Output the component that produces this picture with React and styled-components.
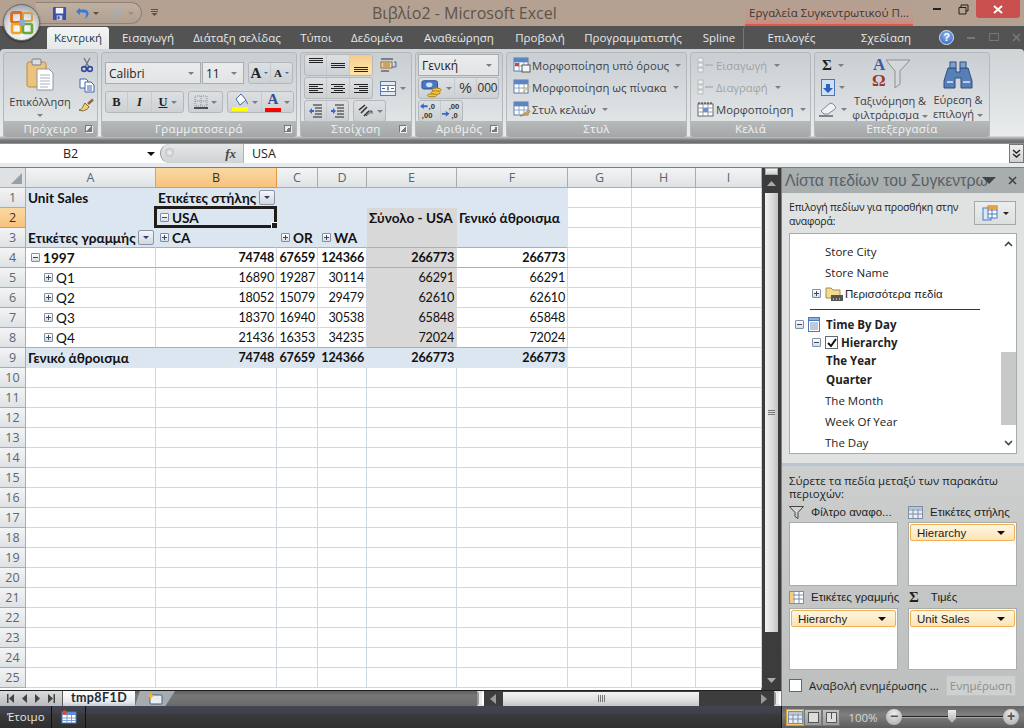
import React from 'react';
import styled, { createGlobalStyle } from 'styled-components';

const UI_FONT = '"Open Sans", "Noto Sans", "DejaVu Sans", sans-serif';
const CELL_FONT = 'Lato, "Open Sans", sans-serif';
const TAHOMA_LIKE = '"Liberation Sans", "DejaVu Sans", sans-serif';

const GlobalStyle = createGlobalStyle`
  html, body { margin: 0; padding: 0; background: #535353; }
  * { box-sizing: border-box; }
  svg { flex: none; display: block; }
`;

// --- WINDOW ---
const Win = styled.div`
  width: 1024px; height: 728px; overflow: hidden; position: relative;
  display: flex; flex-direction: column;
  font-family: ${UI_FONT}; font-size: 11.5px; color: #333;
  background: #535353;
`;

// --- TITLE BAR ---
const TitleBar = styled.div`
  height: 26px; flex: none; display: flex; align-items: flex-start;
  background: #b4a192;
`;
const OfficeButton = styled.div`
  position: absolute; left: 3px; top: 4px; width: 37px; height: 37px; border-radius: 50%;
  background: radial-gradient(circle at 50% 70%, #ffffff, #dfe3e6 45%, #9aa0a4 85%);
  border: 1px solid #6e6a66;
  display: flex; align-items: center; justify-content: center;
  box-shadow: 0 1px 2px rgba(0,0,0,.5);
`;
const Qat = styled.div`
  margin: 2px 0 0 36px; width: 106px; height: 22px; flex: none;
  border: 1px solid #8f8277; border-left: none; border-radius: 0 11px 11px 0;
  background: linear-gradient(#bfb0a3, #b0a091);
  display: flex; align-items: center; padding-left: 16px; gap: 8px;
`;
const QatPair = styled.div`
  display: flex; align-items: center; gap: ${p => p.$gap}px; margin-right: ${p => p.$mr || 0}px;
`;
const QatMore = styled.div`
  margin: 9px 0 0 9px; width: 7px; flex: none;
`;
const WindowTitle = styled.div`
  margin: 2px 0 0 214px; width: 168px; flex: none; font-size: 16px; line-height: 22px; color: #5d544c; white-space: nowrap;
`;
const ContextTab = styled.div`
  margin-left: 205px; width: 168px; height: 26px; flex: none;
  background: linear-gradient(#b4a192, #bb9c8d 70%, #c98c80);
  border-bottom: 2px solid #e2564a;
  color: #3d3733; font-size: 11.5px; line-height: 26px; text-align: center; white-space: nowrap;
`;
const WinButtons = styled.div`
  margin-left: auto; margin-right: 4px; display: flex; align-items: flex-start;
`;
const WinBtn = styled.div`
  width: ${p => p.$w}px; height: 18px; display: flex; align-items: center; justify-content: center;
  background: ${p => p.$close ? '#c9504f' : 'transparent'};
  border-radius: ${p => p.$close ? '0 0 3px 3px' : '0'};
`;

// --- TABS ---
const TabRow = styled.div`
  height: 23px; flex: none; display: flex; align-items: flex-end; padding-left: 47px; background: #535353;
`;
const Tab = styled.div`
  width: ${p => p.$w}px; height: 22px; flex: none; text-align: center; line-height: 21px; font-size: 11.5px; white-space: nowrap;
  color: ${p => p.$active ? '#2b3a4a' : '#e9e9e9'};
  background: ${p => p.$active ? 'linear-gradient(#f4f6f6, #e4e8e9)' : 'transparent'};
  border-radius: 3px 3px 0 0;
  border-left: ${p => p.$divide ? '1px solid #777' : 'none'};
`;
const MiniControls = styled.div`
  margin-left: auto; width: 91px; height: 22px; display: flex; align-items: center; justify-content: space-between; padding: 0 3px 2px 6px;
`;
const Help = styled.div`
  width: 15px; height: 15px; border-radius: 50%; background: radial-gradient(circle at 50% 35%, #8db7ee, #2a62c4);
  border: 1px solid #dde6f4; color: #fff; font: bold 11px/13px "Liberation Sans", sans-serif; text-align: center;
`;

// --- RIBBON ---
const Ribbon = styled.div`
  height: 94px; flex: none; display: flex; gap: 3px; padding: 3px 4px 0 3px;
  border-radius: 4px 4px 0 0;
  background: linear-gradient(#cfd4d7, #dfe3e4 60%, #e9ecec 92%, #77797a 97%, #6a6c6d);
`;
const Group = styled.section`
  width: ${p => p.$w}px; height: 86px; flex: none; display: flex; flex-direction: column;
  border: 1px solid #b4b8ba; border-radius: 3px; overflow: hidden;
  background: linear-gradient(#c9ced2, #d6dadd 45%, #e6eaea);
`;
const GroupBody = styled.div`
  flex: 1; min-height: 0; display: flex; flex-direction: ${p => p.$col ? 'column' : 'row'};
  gap: ${p => p.$gap || 0}px; padding: ${p => p.$pad || '0'};
`;
const GroupLabel = styled.div`
  height: 16px; flex: none; position: relative; text-align: center; line-height: 16px; font-size: 11.5px;
  color: #f1f3f3; letter-spacing: .3px;
  background: linear-gradient(#b6babb, #a3a7a8);
`;
const Launcher = styled.i`
  position: absolute; right: 4px; top: 4px; width: 8px; height: 8px;
  border: 1px solid #777; border-right-color: #eee; border-bottom-color: #eee;
  background: linear-gradient(135deg, #eee 50%, #777 50%);
`;
const PasteCol = styled.div`
  width: 72px; display: flex; flex-direction: column; align-items: center; padding-top: 5px; color: #3a3f44;
`;
const PasteText = styled.div`
  margin-top: 3px; font-size: 11px; line-height: 15px;
`;
const Caret = styled.i`
  display: inline-block; flex: none; width: 0; height: 0; margin: ${p => p.$m || '0'};
  border-left: ${p => p.$s || 3}px solid transparent; border-right: ${p => p.$s || 3}px solid transparent;
  border-top: ${p => p.$s || 3}px solid ${p => p.$c || '#7a7f84'};
`;
const IconCol = styled.div`
  flex: 1; display: flex; flex-direction: column; align-items: center; gap: 5px; padding-top: 4px;
`;
const SmallToolCol = styled(IconCol)`
  flex: none; width: 36px; gap: 6px; padding-top: 5px;
`;
const Row = styled.div`
  display: flex; align-items: center; gap: ${p => p.$gap || 0}px;
  height: ${p => p.$h ? `${p.$h}px` : 'auto'};
`;
const Combo = styled.div`
  width: ${p => p.$w}px; height: 22px; flex: none; display: flex; align-items: center; justify-content: space-between;
  padding: 0 6px 0 3px; font-size: 12px; color: #222;
  background: linear-gradient(#e9ebec, #e2e4e5); border: 1px solid #a9adb0;
`;
const Seg = styled.div`
  display: flex; flex: none; height: 22px; border: 1px solid #b4b8bb; border-radius: 3px; overflow: hidden;
  background: linear-gradient(#dde0e2, #cdd1d4);
  margin-left: ${p => p.$ml || 0}px;
  align-self: ${p => p.$start ? 'flex-start' : 'auto'};
`;
const SegBtn = styled.div`
  width: ${p => p.$w}px; height: 100%; flex: none; display: flex; align-items: center; justify-content: center; gap: 3px;
  border-right: ${p => p.$last ? 'none' : '1px solid #c6cacc'};
  background: ${p => p.$on ? 'linear-gradient(#f7c98d, #fbdc9b 50%, #fde3a6)' : 'transparent'};
  color: #222;
`;
const BoldLetter = styled.span`
  font: ${p => p.$i ? 'italic' : 'normal'} bold ${p => p.$s || 12.5}px/${p => p.$s || 14}px "Liberation Serif", serif;
  text-decoration: ${p => p.$u ? 'underline' : 'none'};
  color: ${p => p.$c || '#222'};
`;
const SigmaInArea = styled(BoldLetter)`
  margin: 0 5px 0 1px;
`;
const BigA = styled.span`
  font: bold ${p => p.$s}px "Liberation Serif", serif; color: #222; line-height: 18px;
`;
const ColorBar = styled.i`
  width: 16px; height: 4px; background: #ff0000;
`;
const ColorStack = styled.div`
  display: flex; flex-direction: column; align-items: center; gap: 1px;
`;
const Stripes = styled.div`
  width: 14px; height: 14px; display: flex; flex-direction: column; gap: 1px;
  align-items: ${p => p.$a || 'center'}; justify-content: ${p => p.$v || 'center'};
`;
const Stripe = styled.i`
  display: block; height: 1px; background: #222; width: ${p => p.$w || 14}px;
`;
const GripStripe = styled(Stripe)`
  width: 7px; background: #777;
`;
const NumText = styled.span`
  font-family: "Liberation Sans", sans-serif; font-size: ${p => p.$s || 12}px; color: #333;
`;
const StyleRow = styled.div`
  height: 22px; flex: none; display: flex; align-items: center; gap: 1px; font-size: 11.3px; white-space: nowrap;
  color: ${p => p.$off ? '#a0a4a7' : '#3c4147'};
`;
const EditBig = styled.div`
  width: ${p => p.$w}px; flex: none; display: flex; flex-direction: column; align-items: center; padding-top: 2px;
  font-size: 11px; line-height: 14px; color: #3c4147; text-align: center; white-space: nowrap;
`;
const BigIcon = styled.div`
  height: 36px; display: flex; align-items: flex-end; justify-content: center; margin-bottom: 3px;
`;

// --- FORMULA BAR ---
const FormulaBar = styled.div`
  height: 20px; flex: none; display: flex; background: #fff;
  border-top: 1px solid #8f9294;
`;
const NameBox = styled.div`
  width: 160px; flex: none; display: flex; align-items: center; font-size: 12.5px; color: #222;
  padding-left: 63px; gap: 69px;
`;
const FxZone = styled.div`
  width: 84px; flex: none; display: flex; align-items: center; justify-content: flex-end; padding-right: 7px; position: relative;
  background: linear-gradient(#e4e6e7, #d0d3d5); border-right: 1px solid #b0b3b6;
  border-radius: 10px 0 0 10px; border-left: 1px solid #8f9294;
  font: italic bold 13px "Liberation Serif", serif; color: #444;
  &::before { content: ''; position: absolute; left: 4px; top: 4px; width: 9px; height: 9px; border-radius: 50%; background: radial-gradient(#f5f5f5, #a9acae); }
`;
const FormulaText = styled.div`
  flex: 1; padding-left: 8px; font-size: 12.5px; line-height: 19px; color: #222;
`;
const ExpandBtn = styled.div`
  width: 15px; flex: none; display: flex; align-items: center; justify-content: center;
  background: linear-gradient(#eee, #cfd2d4); border: 1px solid #777;
`;
const Strip = styled.div`
  height: 5px; flex: none; background: #e7eaec; border-bottom: 1px solid #7b7e80;
`;

// --- MAIN ---
const Main = styled.div`
  height: 538px; flex: none; display: flex;
`;
const LeftCol = styled.div`
  width: 781px; flex: none; display: flex; flex-direction: column;
`;
const SheetRow = styled.div`
  height: 522px; flex: none; display: flex; background: #fff;
`;
const Grid = styled.div`
  width: 762px; flex: none; display: grid; background: #fff; border-right: 1px solid #7b7e80;
  grid-template-columns: 26px 130px 121px 41px 49px 90px 111px 64px 64px 66px;
  grid-auto-rows: 20px; align-content: start;
  font-family: ${CELL_FONT}; font-size: 13.6px; color: #111;
`;
const Head = styled.div`
  display: flex; align-items: center; justify-content: center;
  font-family: ${UI_FONT}; font-size: 12.5px;
  color: ${p => p.$on ? '#3b3020' : '#5a6672'};
  background: ${p => p.$on ? 'linear-gradient(#f9d9a4, #f7c27c)' : 'linear-gradient(#f3f4f5, #dfe2e4)'};
  border-right: 1px solid ${p => p.$on ? '#e39a3e' : '#a9adb0'};
  border-bottom: 1px solid ${p => p.$on ? '#e39a3e' : '#a9adb0'};
`;
const Corner = styled.div`
  background: #dfe2e4; border-right: 1px solid #a9adb0; border-bottom: 1px solid #a9adb0;
  display: flex; align-items: flex-end; justify-content: flex-end; padding: 0 3px 3px 0;
  &::after { content: ''; width: 0; height: 0; border-left: 11px solid transparent; border-bottom: 11px solid #9a9fa3; }
`;
const Cell = styled.div`
  position: relative; display: flex; align-items: center; gap: 2px; white-space: nowrap; min-width: 0;
  justify-content: ${p => p.$right ? 'flex-end' : 'flex-start'};
  padding: 0 ${p => p.$right ? 2 : 1}px 0 ${p => p.$indent || 2}px;
  font-weight: ${p => p.$bold ? 700 : 400};
  font-size: ${p => p.$right ? '12.6px' : 'inherit'};
  letter-spacing: ${p => p.$right ? '-.2px' : '0'};
  background: ${p => p.$bg || '#fff'};
  border-right: 1px solid ${p => p.$bg ? p.$bg : '#d0d7e5'};
  border-bottom: 1px solid ${p => p.$line ? '#95b3d7' : p.$bg ? p.$bg : '#d0d7e5'};
`;
const Toggle = styled.span`
  width: 9px; height: 9px; flex: none; position: relative; border: 1px solid #7f8ea3; border-radius: 1px;
  background: linear-gradient(#fff, #d4dbe4); margin-right: 1px;
  &::before { content: ''; position: absolute; left: 1px; right: 1px; top: 3px; height: 1px; background: #3b4a5e; }
  ${p => p.$plus && `&::after { content: ''; position: absolute; top: 1px; bottom: 1px; left: 3px; width: 1px; background: #3b4a5e; }`}
`;
const FilterBtn = styled.span`
  position: absolute; right: 1px; top: 2px; width: 16px; height: 15px; display: flex; align-items: center; justify-content: center;
  border: 1px solid #8a95a5; border-radius: 2px; background: linear-gradient(#f5f6f8, #d2d8e0);
`;
const Selection = styled.div`
  position: absolute; inset: -2px -1px -1px -2px; border: 3px solid #211c18; pointer-events: none;
  &::after { content: ''; position: absolute; right: -4px; bottom: -4px; width: 5px; height: 5px; background: #211c18; border: 1px solid #fff; }
`;
const VScroll = styled.div`
  width: 19px; flex: none; display: flex; flex-direction: column; align-items: center; background: #3c3c3c;
`;
const SplitBox = styled.div`
  width: 13px; height: 7px; flex: none; background: linear-gradient(#f2f2f2, #d0d0d0); border: 1px solid #aaa;
`;
const ScrollBtn = styled.div`
  width: 13px; height: 13px; flex: none; display: flex; align-items: center; justify-content: center;
  margin-top: ${p => p.$end ? 'auto' : '2px'}; margin-bottom: ${p => p.$end ? '3px' : '0'};
`;
const VThumb = styled.div`
  width: 13px; height: 439px; margin-top: 3px; flex: none; display: flex; flex-direction: column; gap: 1px; align-items: center; justify-content: center;
  background: linear-gradient(90deg, #f1f1f1, #d9d9d9 60%, #c2c2c2);
`;
const SheetFoot = styled.div`
  height: 16px; flex: none; display: flex; background: linear-gradient(#5f5f5f, #777 30%, #6a6a6a);
  border-top: 1px solid #1e1e1e;
`;
const TabNav = styled.div`
  width: 63px; flex: none; display: flex; align-items: center; justify-content: space-around; padding: 0 4px;
  background: linear-gradient(#d9dbdc, #b9bcbe); border-right: 1px solid #5a5a5a; color: #333;
`;
const SheetTab = styled.div`
  width: 72px; flex: none; text-align: center; font-size: 12.5px; line-height: 14px; color: #232a33; letter-spacing: .4px;
  font-family: ${CELL_FONT}; font-weight: 700;
  background: linear-gradient(#ffffff, #e7eaee 70%, #c7cbd0);
`;
const NewTab = styled.div`
  width: 40px; flex: none; display: flex; align-items: center; justify-content: center;
  background: #a6abaf; clip-path: polygon(12% 0, 100% 0, 76% 100%, 0 100%);
`;
const HScroll = styled.div`
  margin-left: auto; width: 304px; flex: none; display: flex; align-items: center; background: #3d3d3d;
`;
const HEnd = styled.div`
  width: 7px; height: 15px; flex: none; background: #ececec; border: 2px solid #e2e2e2; border-left-color: #999; border-right-color: #fff;
`;
const HThumb = styled.div`
  width: 196px; height: 14px; flex: none; display: flex; align-items: center; justify-content: center; gap: 1px;
  background: linear-gradient(#f2f2f2, #e0e0e0 55%, #c5c5c5);
  i { display: block; width: 1px; height: 7px; background: #777; }
`;

// --- FIELD LIST PANE ---
const Pane = styled.aside`
  width: 243px; flex: none; display: flex; flex-direction: column;
  background: #dfe2e1; border-left: 1px solid #7b7e80;
`;
const PaneTitle = styled.div`
  height: 25px; flex: none; display: flex; align-items: center; padding: 0 7px 0 3px;
  background: #a8adae; color: #566167; font-size: 15.8px; font-family: ${TAHOMA_LIKE}; white-space: nowrap;
`;
const PaneTitleText = styled.div`
  width: 197px; flex: none;
`;
const PaneClose = styled.div`
  margin-left: auto;
`;
const PaneTop = styled.div`
  display: flex; justify-content: space-between; padding: 7px 8px 0 7px; height: 40px; flex: none;
`;
const PaneHint = styled.div`
  width: 180px; font-size: 10.5px; letter-spacing: -.2px; line-height: 14px; color: #222;
`;
const LayoutBtn = styled.div`
  width: 42px; height: 24px; flex: none; margin-top: 1px; display: flex; align-items: center; justify-content: space-around; padding: 0 4px;
  background: linear-gradient(#eceeee, #dcdfdf); border: 1px solid #a4a8a9;
`;
const FieldBox = styled.div`
  height: 221px; flex: none; margin: 0 7px; display: flex; background: #fff; border: 1px solid #a6aaab;
`;
const FieldRows = styled.div`
  flex: 1; padding-top: 7px; font-size: 11.5px; color: #222;
`;
const FieldRow = styled.div`
  height: ${p => p.$h || 21}px; display: flex; align-items: center; gap: 3px; white-space: nowrap;
  padding-left: ${p => p.$x}px; font-weight: ${p => p.$bold ? 700 : 400};
`;
const MoreFields = styled.span`
  font-family: ${TAHOMA_LIKE}; font-size: 11.5px; margin-left: -1px;
`;
const DayLabel = styled.span`
  margin-left: 3px;
`;
const FieldRule = styled.div`
  height: 1px; margin: 5px 21px 5px 20px; background: #333;
`;
const FieldScroll = styled.div`
  width: 15px; flex: none; display: flex; flex-direction: column; align-items: center; justify-content: space-between; position: relative; padding: 7px 0;
`;
const FieldThumb = styled.div`
  position: absolute; left: 0; right: 0; top: 118px; height: 73px; background: #c8c8c8;
`;
const CheckBox = styled.span`
  width: 13px; height: 13px; flex: none; border: 1px solid #5f6a75; background: #fff; display: flex; align-items: center; justify-content: center;
`;
const PaneBottom = styled.div`
  flex: 1; min-height: 0; margin-top: 9px; padding: 8px 8px 0 7px; display: flex; flex-direction: column;
  border-top: 3px solid #b8c4cf;
  background: linear-gradient(#cdcfce, #bdbfbe);
  color: #222;
`;
const DragHint = styled.div`
  font-size: 11.5px; line-height: 13px; height: 28px; flex: none;
`;
const Areas = styled.div`
  display: grid; grid-template-columns: 109px 109px; column-gap: 10px; flex: none;
`;
const AreaHead = styled.div`
  height: ${p => p.$h}px; display: flex; align-items: center; gap: 7px; white-space: nowrap;
  font-family: ${TAHOMA_LIKE}; font-size: 11.5px;
`;
const AreaBox = styled.div`
  height: ${p => p.$h}px; background: #fff; border: 1px solid #a9acab; padding: 1px;
`;
const Chip = styled.div`
  height: 17px; display: flex; align-items: center; justify-content: space-between; padding: 0 9px 0 6px; font: 11.5px ${TAHOMA_LIKE}; color: #222;
  background: linear-gradient(#fdf6e3, #fde3b4); border: 1px solid #f0b155; border-radius: 2px;
`;
const PaneActions = styled.div`
  display: flex; align-items: center; gap: 7px; margin-top: 5px; font-size: 11.5px; white-space: nowrap;
`;
const DeferBox = styled.span`
  width: 13px; height: 13px; flex: none; background: #fff; border: 1px solid #666;
`;
const UpdateBtn = styled.div`
  margin-left: auto; width: 73px; height: 21px; text-align: center; line-height: 20px; color: #8c8e8e;
  background: #cfd1d0; border: 1px solid #c2c4c3;
`;

// --- STATUS BAR ---
const StatusBar = styled.div`
  flex: 1; display: flex; background: linear-gradient(#434552 0, #3d3f4a 33%, #3b3b3b 36%, #2f2f2f 100%); color: #e6e6e6;
`;
const StatusText = styled.div`
  width: 52px; flex: none; padding: 3px 0 0 7px; font-size: 11.5px; border-right: 1px solid #111;
`;
const StatusCell = styled.div`
  width: 34px; flex: none; display: flex; align-items: center; justify-content: center; border-right: 1px solid #111;
`;
const StatusRight = styled.div`
  margin-left: auto; width: 243px; flex: none; display: flex; align-items: center; padding-left: 4px;
  background: linear-gradient(#666, #7f7f7f 40%, #5c5c5c); border-left: 1px solid #111;
`;
const ViewBtn = styled.div`
  width: 18px; height: 17px; flex: none; display: flex; align-items: center; justify-content: center;
  background: ${p => p.$on ? 'linear-gradient(#fbe3a8, #f6c565)' : 'linear-gradient(#c2c2c2, #9c9c9c)'};
  border: 1px solid ${p => p.$on ? '#d99a3a' : '#777'};
`;
const Zoom = styled.div`
  width: 46px; flex: none; text-align: center; font-size: 11.5px; color: #d8d8d8;
`;
const Slider = styled.div`
  position: relative; width: 133px; height: 16px; flex: none; display: flex; align-items: center; justify-content: space-between;
  &::before { content: ''; position: absolute; left: 8px; right: 8px; top: 7px; height: 1px; background: #222; box-shadow: 0 1px 0 #aaa; }
`;
const ZoomBtn = styled.div`
  position: relative; width: 16px; height: 16px; border-radius: 50%; text-align: center;
  font: bold 14px/14px "Liberation Sans", sans-serif; color: #555;
  background: radial-gradient(circle at 50% 30%, #eee, #a5a5a5);
`;
const SliderThumb = styled.div`
  position: absolute; left: 62px; top: 1px; width: 8px; height: 13px;
  background: linear-gradient(#eee, #aaa); clip-path: polygon(0 0, 100% 0, 100% 65%, 50% 100%, 0 65%);
`;

// --- ICONS ---
const OfficeLogo = () => (
  <svg width="24" height="24" viewBox="0 0 24 24">
    <rect x="1.5" y="1.5" width="10" height="10" rx="2" fill="none" stroke="#e2691d" strokeWidth="2.8" />
    <rect x="13" y="2" width="9" height="8" rx="1.5" fill="none" stroke="#d9a03c" strokeWidth="2" />
    <rect x="2" y="13" width="9" height="9" rx="1.5" fill="none" stroke="#efa51e" strokeWidth="2.6" />
    <rect x="13" y="13" width="9" height="9" rx="1.5" fill="none" stroke="#6aa83a" strokeWidth="2.6" />
    <rect x="9" y="9" width="6" height="6" fill="#8aa9cf" />
  </svg>
);
const SaveIcon = () => (
  <svg width="15" height="15" viewBox="0 0 16 16">
    <rect x="1" y="1" width="14" height="14" rx="1" fill="#3a50a8" />
    <rect x="4" y="2" width="8" height="6" fill="#f4f6fb" />
    <rect x="5" y="10" width="6" height="5" fill="#c9d0dc" />
    <rect x="6" y="11" width="2" height="3" fill="#3a50a8" />
  </svg>
);
const UNDO_PATH = 'M5 2 L1 5.5 L5 9 V6.5 H9 C11 6.5 11.5 8 11 10 L9.5 13 C13 11 14.5 8 13 5.5 C12 4 10.5 3.5 8.5 3.5 H5 Z';
const Undo = () => (
  <svg width="15" height="14" viewBox="0 0 15 14"><path d={UNDO_PATH} fill="#3c78d8" /></svg>
);
const Redo = () => (
  <svg width="15" height="14" viewBox="0 0 15 14"><path d={UNDO_PATH} fill="none" stroke="#9fb0bd" transform="translate(15,0) scale(-1,1)" /></svg>
);
const QatMoreIcon = () => (
  <svg width="7" height="7" viewBox="0 0 7 7"><path d="M0 .5 H7 M0 2.5 H7" stroke="#5a5148" /><path d="M0.5 4 H6.5 L3.5 7 Z" fill="#5a5148" /></svg>
);
const PasteIcon = () => (
  <svg width="28" height="33" viewBox="0 0 28 33">
    <rect x="1" y="4" width="19" height="25" rx="2" fill="#edc27c" stroke="#b98b47" />
    <rect x="6" y="1" width="9" height="6" rx="1" fill="#d9dde0" stroke="#7d7f80" />
    <path d="M11 11 H23 L27 15 V32 H11 Z" fill="#fff" stroke="#8c96a3" />
    <path d="M14 17 H24 M14 20 H24 M14 23 H24 M14 26 H24 M14 29 H22" stroke="#a9b3bf" />
  </svg>
);
const CutIcon = () => (
  <svg width="12" height="16" viewBox="0 0 12 16">
    <path d="M3 1 L8 10 M9 1 L4 10" stroke="#6f7a86" strokeWidth="1.4" />
    <circle cx="3" cy="12" r="2.4" fill="none" stroke="#34459e" strokeWidth="1.6" />
    <circle cx="9" cy="12" r="2.4" fill="none" stroke="#34459e" strokeWidth="1.6" />
  </svg>
);
const CopyIcon = () => (
  <svg width="16" height="15" viewBox="0 0 16 15">
    <path d="M1 1 H7 L9 3 V10 H1 Z" fill="#fff" stroke="#3d64ad" />
    <path d="M6 4 H12 L15 7 V14 H6 Z" fill="#fff" stroke="#3d64ad" />
    <path d="M8 8 H13 M8 10 H13 M8 12 H13" stroke="#3d64ad" />
  </svg>
);
const BrushIcon = () => (
  <svg width="17" height="15" viewBox="0 0 17 15">
    <path d="M10 6 L15 1.5" stroke="#8a6a3d" strokeWidth="2.4" />
    <path d="M1 12 C4 12 5 8 7 5 L11 9 C9 12 5 14 1 12 Z" fill="#f3d26b" stroke="#7c6a3c" />
  </svg>
);
const Borders = () => (
  <svg width="14" height="14" viewBox="0 0 14 14">
    <rect x="1" y="1" width="12" height="10" fill="none" stroke="#8a8e92" strokeDasharray="1 1" />
    <path d="M7 1 V11 M1 6 H13" stroke="#8a8e92" strokeDasharray="1 1" />
    <path d="M0 13 H14" stroke="#222" strokeWidth="1.4" />
  </svg>
);
const FillIcon = () => (
  <svg width="17" height="18" viewBox="0 0 17 18">
    <path d="M4 6 L9 1 L14 7 L8 12 Z" fill="#fff" stroke="#3f6aa6" />
    <path d="M14 7 C16 9 16 11 15.5 11.5 C15 11 14 9 14 7" fill="#3f6aa6" />
    <rect x="0" y="14" width="16" height="4" fill="#ffff00" />
  </svg>
);
const WrapIcon = () => (
  <svg width="17" height="17" viewBox="0 0 17 17">
    <path d="M1 2 H13 M1 14 H9" stroke="#333" />
    <rect x="1" y="5" width="11" height="6" fill="#f6d9a6" stroke="#9a6a30" />
    <path d="M3 7 H10 M3 9 H10" stroke="#9a6a30" />
    <path d="M14 5 H16 V10 H12" fill="none" stroke="#3f6aa6" />
  </svg>
);
const MergeIcon = () => (
  <svg width="16" height="15" viewBox="0 0 16 15">
    <rect x="0.5" y="0.5" width="15" height="14" fill="#dfeaf6" stroke="#5a7ba6" />
    <rect x="0.5" y="4.5" width="15" height="6" fill="#fff" stroke="#5a7ba6" />
    <path d="M2 7.5 H5 M11 7.5 H14" stroke="#3f6aa6" />
    <path d="M8 5.5 V9.5" stroke="#222" />
  </svg>
);
const Indent = ({ flip }) => (
  <svg width="15" height="14" viewBox="0 0 15 14">
    <path d="M5 1 H14 M7 4 H14 M7 7 H14 M7 10 H14 M5 13 H14" stroke="#222" />
    <path d={flip ? 'M1 6 H3 V4 L6 7 L3 10 V8 H1 Z' : 'M6 6 H4 V4 L1 7 L4 10 V8 H6 Z'} fill="#3768c4" />
  </svg>
);
const OrientIcon = () => (
  <svg width="17" height="15" viewBox="0 0 17 15">
    <path d="M2 6 L8 1 M4 9 L10 3 M7 12 L12 7" stroke="#333" strokeWidth="1.6" />
    <path d="M9 12 L15 7 M15 7 L12 7 M15 7 L15 10" stroke="#555" />
  </svg>
);
const CoinsIcon = () => (
  <svg width="22" height="19" viewBox="0 0 24 19">
    <rect x="1" y="1" width="17" height="9" rx="2" fill="#4a78c6" stroke="#254e91" />
    <ellipse cx="9" cy="5.5" rx="3.5" ry="2.6" fill="#cfe0f6" />
    <ellipse cx="17" cy="11" rx="5" ry="2" fill="#f2c63f" stroke="#a5791a" />
    <ellipse cx="16" cy="14" rx="5" ry="2" fill="#f2c63f" stroke="#a5791a" />
    <ellipse cx="12" cy="17" rx="5" ry="1.6" fill="#f2c63f" stroke="#a5791a" />
  </svg>
);
const DecimalIcon = ({ rev }) => (
  <svg width="21" height="18" viewBox="0 0 22 18" fontFamily="Liberation Sans, sans-serif" fontWeight="700" fontSize="8" fill="#333">
    <text x={rev ? 8 : 10} y="7">{rev ? ',00' : ',0'}</text>
    <text x={rev ? 11 : 3} y="16">{rev ? ',0' : ',00'}</text>
    <path d={rev ? 'M1 11 H5 V9 L9 12 L5 15 V13 H1 Z' : 'M9 3 H5 V1 L1 4 L5 7 V5 H9 Z'} fill="#3768c4" />
  </svg>
);
const StyleIcon = ({ kind }) => (
  <svg width="18" height="16" viewBox="0 0 18 16">
    <rect x="1" y="1" width="14" height="13" fill="#fff" stroke="#5a7ba6" />
    <path d="M1 5 H15 M1 9 H15 M6 1 V14 M11 1 V14" stroke="#8aa5c8" />
    <rect x="1" y="1" width="14" height="4" fill="#5b86c2" />
    {kind === 0 && <rect x="2" y="6" width="4" height="3" fill="#d2452f" />}
    {kind === 0 && <rect x="9" y="8" width="8" height="7" fill="#f3f4f5" stroke="#555" />}
    {kind === 1 && <path d="M8 15 L16 7 L17 8 L9 15 Z" fill="#e5b13a" />}
    {kind === 2 && <path d="M7 15 L16 9 L17 11 L9 15 Z" fill="#e5b13a" stroke="#8a6a1c" strokeWidth=".5" />}
  </svg>
);
const CellsOp = ({ format }) => (
  <svg width="18" height="16" viewBox="0 0 18 16">
    {format ? (
      <g>
        <rect x="1" y="3" width="15" height="12" fill="#fff" stroke="#667" />
        <path d="M1 7 H16 M1 11 H16 M6 3 V15 M11 3 V15" stroke="#99a" />
        <path d="M2 1 V3 M5 1 V3 M8 1 V3 M11 1 V3 M14 1 V3" stroke="#333" />
        <rect x="6" y="7" width="5" height="4" fill="#6a92cf" />
      </g>
    ) : (
      <g stroke="#b7bbbe" fill="#eef0f1">
        <rect x="1" y="1" width="5" height="4" />
        <rect x="1" y="6" width="5" height="4" />
        <rect x="1" y="11" width="5" height="4" />
        <path d="M8 8 H16" strokeWidth="2" />
      </g>
    )}
  </svg>
);
const FillDown = () => (
  <svg width="14" height="17" viewBox="0 0 14 17">
    <rect x="0.5" y="0.5" width="13" height="16" fill="#cfe0f5" stroke="#4b78bd" />
    <path d="M5 5 H9 V9 H12 L7 14 L2 9 H5 Z" fill="#2b62c4" />
  </svg>
);
const Eraser = () => (
  <svg width="19" height="15" viewBox="0 0 19 15">
    <path d="M2 9 L10 2 C11 1 13 1 14 2 L16 4 C17 5 17 6 16 7 L9 12 H5 Z" fill="#eef1f5" stroke="#7a8a9e" />
    <path d="M0 14 H14" stroke="#222" />
  </svg>
);
const SortIcon = () => (
  <svg width="42" height="37" viewBox="0 0 42 37">
    <path d="M17 6 H41 L31 17 V30 L26 34 V17 Z" fill="#d5d8da" stroke="#8d9093" />
    <text x="4" y="16" fontFamily="Liberation Serif, serif" fontWeight="700" fontSize="17" fill="#3b5aa8">A</text>
    <text x="3" y="32" fontFamily="Liberation Serif, serif" fontWeight="700" fontSize="17" fill="#9c3a2d">Ω</text>
  </svg>
);
const Binoculars = () => (
  <svg width="30" height="30" viewBox="0 0 30 30">
    <path d="M5 8 H13 V12 H17 V8 H25 L29 21 V28 H18 V18 H12 V28 H1 V21 Z" fill="#567fb5" stroke="#2e4f80" />
    <rect x="7" y="2" width="6" height="6" fill="#7ea1cf" stroke="#2e4f80" />
    <rect x="17" y="2" width="6" height="6" fill="#7ea1cf" stroke="#2e4f80" />
    <path d="M4 22 H10 M20 22 H27" stroke="#b9d0ec" strokeWidth="2" />
  </svg>
);
const FieldsIcon = () => (
  <svg width="16" height="16" viewBox="0 0 16 16">
    <rect x="1" y="3" width="8" height="12" fill="#dbe8f7" stroke="#4b78bd" />
    <rect x="6" y="1" width="9" height="12" fill="#fff" stroke="#4b78bd" />
    <path d="M6 5 H15 M6 9 H15 M10 1 V13" stroke="#4b78bd" />
    <rect x="6" y="1" width="9" height="3" fill="#e8a33a" />
  </svg>
);
const TableIcon = ({ hot }) => (
  <svg width="15" height="13" viewBox="0 0 15 13">
    <rect x="0.5" y="0.5" width="14" height="12" fill={hot ? '#fff' : '#e8eef7'} stroke="#7d8ea6" />
    <path d="M0 4 H15 M0 8 H15 M5 0 V13 M10 0 V13" stroke="#7d8ea6" />
    {hot && <rect x="1" y="1" width="3" height="11" fill="#f2cf7e" />}
    {!hot && <rect x="1" y="1" width="13" height="2" fill="#b5c5dd" />}
  </svg>
);
const Funnel = () => (
  <svg width="15" height="13" viewBox="0 0 15 13">
    <path d="M0.5 0.5 H14.5 L9 6.5 V12.5 L6 10.5 V6.5 Z" fill="#cfd1d2" stroke="#444" />
  </svg>
);
const FolderIcon = () => (
  <svg width="18" height="15" viewBox="0 0 18 15">
    <path d="M1 2 H6 L8 4 H15 V12 H1 Z" fill="#f3dc90" stroke="#a88f45" />
    <rect x="6" y="9" width="12" height="6" fill="#555" />
    <path d="M8 13 H9 M11 13 H12 M14 13 H15" stroke="#fff" />
  </svg>
);
const DocIcon = () => (
  <svg width="12" height="15" viewBox="0 0 12 15">
    <rect x="0.5" y="0.5" width="11" height="14" fill="#fff" stroke="#4b78bd" />
    <rect x="0.5" y="0.5" width="11" height="3" fill="#8db0de" stroke="#4b78bd" />
    <path d="M2 6 H10 M2 8 H10 M2 10 H10 M2 12 H10" stroke="#7d95b8" />
  </svg>
);
const MacroIcon = () => (
  <svg width="16" height="14" viewBox="0 0 16 14">
    <rect x="1" y="2" width="14" height="11" fill="#fff" stroke="#4b78bd" />
    <rect x="1" y="2" width="14" height="3" fill="#5d8ed4" />
    <path d="M1 8 H15 M1 10.5 H15 M6 5 V13 M10.5 5 V13" stroke="#7d9ccb" />
    <circle cx="3.5" cy="2.5" r="2.2" fill="#e4442f" />
  </svg>
);
const NavGlyph = ({ d }) => (
  <svg width="7" height="9" viewBox="0 0 7 9"><path d={d} fill="#444" /></svg>
);
const NewSheetIcon = () => (
  <svg width="17" height="13" viewBox="0 0 17 13">
    <rect x="3" y="3" width="12" height="9" rx="1" fill="#e8edf3" stroke="#4d5f78" />
    <path d="M3.5 0 L5 3 L8 3.5 L5 5 L3.5 8 L2.5 5 L0 3.5 L2.5 3 Z" fill="#f4b73b" />
  </svg>
);
const Chevron = ({ up, c = '#444' }) => (
  <svg width="9" height="6" viewBox="0 0 9 6"><path d={up ? 'M1 5 L4.5 1.5 L8 5' : 'M1 1 L4.5 4.5 L8 1'} fill="none" stroke={c} strokeWidth="1.6" /></svg>
);
const CloseX = ({ s = 9, c = '#3f4549' }) => (
  <svg width={s} height={s} viewBox="0 0 9 9"><path d="M1 1 L8 8 M8 1 L1 8" stroke={c} strokeWidth="1.6" /></svg>
);

// --- DATA ---
const tabs = [
  ['Κεντρική', 62], ['Εισαγωγή', 78], ['Διάταξη σελίδας', 100], ['Τύποι', 58], ['Δεδομένα', 64],
  ['Αναθεώρηση', 100], ['Προβολή', 62], ['Προγραμματιστής', 124], ['Spline', 48], ['Επιλογές', 96], ['Σχεδίαση', 94],
];
const columns = ['A', 'B', 'C', 'D', 'E', 'F', 'G', 'H', 'I'];
const BLUE = '#dce6f1';
const GREY = '#d8d8d8';

const totals = ['74748', '67659', '124366', '266773', '266773'];
const quarters = [
  ['Q1', '16890', '19287', '30114', '66291', '66291'],
  ['Q2', '18052', '15079', '29479', '62610', '62610'],
  ['Q3', '18370', '16940', '30538', '65848', '65848'],
  ['Q4', '21436', '16353', '34235', '72024', '72024'],
];

const Blank = ({ n = 3 }) => Array.from({ length: n }, (_, i) => <Cell key={i} />);

const Filter = () => <FilterBtn><Caret $s={3} $c="#2f3f66" /></FilterBtn>;

const SheetHeader = () => (
  <>
    <Corner />
    {columns.map(c => <Head key={c} $on={c === 'B'}>{c}</Head>)}
  </>
);

const PivotRows = () => (
  <>
    <Head>1</Head>
    <Cell $bg={BLUE} $bold>Unit Sales</Cell>
    <Cell $bg={BLUE} $bold>Ετικέτες στήλης<Filter /></Cell>
    <Cell $bg={BLUE} /><Cell $bg={BLUE} /><Cell $bg={BLUE} /><Cell $bg={BLUE} />
    <Blank />

    <Head $on>2</Head>
    <Cell $bg={BLUE} />
    <Cell $bg={BLUE} $bold $indent={4}><Toggle />USA<Selection /></Cell>
    <Cell $bg={BLUE} /><Cell $bg={BLUE} />
    <Cell $bg={GREY} $bold>Σύνολο - USA</Cell>
    <Cell $bg={BLUE} $bold>Γενικό άθροισμα</Cell>
    <Blank />

    <Head>3</Head>
    <Cell $bg={BLUE} $bold $line>Ετικέτες γραμμής<Filter /></Cell>
    <Cell $bg={BLUE} $bold $line $indent={4}><Toggle $plus />CA</Cell>
    <Cell $bg={BLUE} $bold $line $indent={4}><Toggle $plus />OR</Cell>
    <Cell $bg={BLUE} $bold $line $indent={4}><Toggle $plus />WA</Cell>
    <Cell $bg={GREY} $line /><Cell $bg={BLUE} $line />
    <Blank />

    <Head>4</Head>
    <Cell $bold $line $indent={5}><Toggle />1997</Cell>
    {totals.map((v, i) => <Cell key={i} $right $bold $line $bg={i === 3 ? GREY : undefined}>{v}</Cell>)}
    <Blank />

    {quarters.map(([q, ...vals], r) => (
      <React.Fragment key={q}>
        <Head>{r + 5}</Head>
        <Cell $indent={18} $line={r === 3}><Toggle $plus />{q}</Cell>
        {vals.map((v, i) => <Cell key={i} $right $line={r === 3} $bg={i === 3 ? GREY : undefined}>{v}</Cell>)}
        <Blank />
      </React.Fragment>
    ))}

    <Head>9</Head>
    <Cell $bg={BLUE} $bold>Γενικό άθροισμα</Cell>
    {totals.map((v, i) => <Cell key={i} $right $bold $bg={BLUE}>{v}</Cell>)}
    <Blank />
  </>
);

const EmptyRows = () => Array.from({ length: 16 }, (_, i) => (
  <React.Fragment key={i}>
    <Head>{i + 10}</Head>
    <Blank n={9} />
  </React.Fragment>
));

const lines = (widths) => widths.map((w, i) => <Stripe key={i} $w={w} />);

const ClipboardGroup = () => (
  <Group $w={95}>
    <GroupBody>
      <PasteCol>
        <PasteIcon />
        <PasteText>Επικόλληση</PasteText>
        <Caret $m="5px 0 0" />
      </PasteCol>
      <IconCol><CutIcon /><CopyIcon /><BrushIcon /></IconCol>
    </GroupBody>
    <GroupLabel>Πρόχειρο<Launcher /></GroupLabel>
  </Group>
);

const FontGroup = () => (
  <Group $w={196}>
    <GroupBody $col $gap={7} $pad="9px 3px 0 3px">
      <Row $gap={1}>
        <Combo $w={96}>Calibri<Caret /></Combo>
        <Combo $w={42}>11<Caret /></Combo>
        <Seg $ml={3}>
          <SegBtn $w={22}><BigA $s={15}>A</BigA><Caret $s={2} $c="#3768c4" /></SegBtn>
          <SegBtn $w={21} $last><BigA $s={11}>A</BigA><Caret $s={2} $c="#3768c4" /></SegBtn>
        </Seg>
      </Row>
      <Row $gap={4}>
        <Seg>
          <SegBtn $w={22}><BoldLetter>B</BoldLetter></SegBtn>
          <SegBtn $w={24}><BoldLetter $i>I</BoldLetter></SegBtn>
          <SegBtn $w={31} $last><BoldLetter $u>U</BoldLetter><Caret /></SegBtn>
        </Seg>
        <Seg><SegBtn $w={33} $last><Borders /><Caret /></SegBtn></Seg>
        <Seg>
          <SegBtn $w={34}><FillIcon /><Caret /></SegBtn>
          <SegBtn $w={31} $last>
            <ColorStack>
              <BoldLetter $s={15} $c="#2f4f9a">A</BoldLetter>
              <ColorBar />
            </ColorStack>
            <Caret />
          </SegBtn>
        </Seg>
      </Row>
    </GroupBody>
    <GroupLabel>Γραμματοσειρά<Launcher /></GroupLabel>
  </Group>
);

const AlignmentGroup = () => (
  <Group $w={112}>
    <GroupBody $col $gap={1} $pad="1px 3px 0 3px">
      <Row $gap={7} $h={22}>
        <Seg>
          <SegBtn $w={22}><Stripes $v="flex-start">{lines([14, 14, 14])}</Stripes></SegBtn>
          <SegBtn $w={23}><Stripes>{lines([14, 14, 14])}</Stripes></SegBtn>
          <SegBtn $w={22} $on $last><Stripes $v="flex-end">{lines([14, 14, 14])}</Stripes></SegBtn>
        </Seg>
        <WrapIcon />
      </Row>
      <Row $gap={7} $h={22}>
        <Seg>
          <SegBtn $w={22}><Stripes $a="flex-start">{lines([14, 9, 14, 9, 14])}</Stripes></SegBtn>
          <SegBtn $w={23}><Stripes>{lines([14, 9, 14, 9, 14])}</Stripes></SegBtn>
          <SegBtn $w={22} $last><Stripes $a="flex-end">{lines([14, 9, 14, 9, 14])}</Stripes></SegBtn>
        </Seg>
        <Row $gap={4}><MergeIcon /><Caret /></Row>
      </Row>
      <Row $gap={4} $h={22}>
        <Seg>
          <SegBtn $w={22}><Indent /></SegBtn>
          <SegBtn $w={21} $last><Indent flip /></SegBtn>
        </Seg>
        <Seg><SegBtn $w={31} $last><OrientIcon /><Caret /></SegBtn></Seg>
      </Row>
    </GroupBody>
    <GroupLabel>Στοίχιση<Launcher /></GroupLabel>
  </Group>
);

const NumberGroup = () => (
  <Group $w={88}>
    <GroupBody $col $gap={1} $pad="1px 3px 0 2px">
      <Combo $w={81}>Γενική<Caret /></Combo>
      <Seg>
        <SegBtn $w={36}><CoinsIcon /><Caret /></SegBtn>
        <SegBtn $w={22}><NumText $s={14}>%</NumText></SegBtn>
        <SegBtn $w={21} $last><NumText>000</NumText></SegBtn>
      </Seg>
      <Seg $start>
        <SegBtn $w={22}><DecimalIcon /></SegBtn>
        <SegBtn $w={21} $last><DecimalIcon rev /></SegBtn>
      </Seg>
    </GroupBody>
    <GroupLabel>Αριθμός<Launcher /></GroupLabel>
  </Group>
);

const StylesGroup = () => (
  <Group $w={181}>
    <GroupBody $col $pad="1px 4px 0 6px">
      <StyleRow><StyleIcon kind={0} />Μορφοποίηση υπό όρους<Caret $m="0 0 0 5px" /></StyleRow>
      <StyleRow><StyleIcon kind={1} />Μορφοποίηση ως πίνακα<Caret $m="0 0 0 5px" /></StyleRow>
      <StyleRow><StyleIcon kind={2} />Στυλ κελιών<Caret $m="0 0 0 5px" /></StyleRow>
    </GroupBody>
    <GroupLabel>Στυλ</GroupLabel>
  </Group>
);

const CellsGroup = () => (
  <Group $w={121}>
    <GroupBody $col $pad="1px 4px 0 6px">
      <StyleRow $off><CellsOp />Εισαγωγή<Caret $m="0 0 0 6px" /></StyleRow>
      <StyleRow $off><CellsOp />Διαγραφή<Caret $m="0 0 0 6px" /></StyleRow>
      <StyleRow><CellsOp format />Μορφοποίηση<Caret $m="0 0 0 6px" /></StyleRow>
    </GroupBody>
    <GroupLabel>Κελιά</GroupLabel>
  </Group>
);

const EditingGroup = () => (
  <Group $w={176}>
    <GroupBody>
      <SmallToolCol>
        <Row $gap={6}><BoldLetter $s={15}>Σ</BoldLetter><Caret /></Row>
        <Row $gap={4}><FillDown /><Caret /></Row>
        <Row $gap={3}><Eraser /><Caret /></Row>
      </SmallToolCol>
      <EditBig $w={78}>
        <BigIcon><SortIcon /></BigIcon>
        Ταξινόμηση &amp;
        <span>φιλτράρισμα <Caret $m="0 0 1px" /></span>
      </EditBig>
      <EditBig $w={58}>
        <BigIcon><Binoculars /></BigIcon>
        Εύρεση &amp;
        <span>επιλογή <Caret $m="0 0 1px" /></span>
      </EditBig>
    </GroupBody>
    <GroupLabel>Επεξεργασία</GroupLabel>
  </Group>
);

const FieldList = () => (
  <Pane>
    <PaneTitle>
      <PaneTitleText>Λίστα πεδίων του Συγκεντρω</PaneTitleText>
      <Caret $s={7} $c="#3f4549" />
      <PaneClose><CloseX /></PaneClose>
    </PaneTitle>
    <PaneTop>
      <PaneHint>Επιλογή πεδίων για προσθήκη στην αναφορά:</PaneHint>
      <LayoutBtn><FieldsIcon /><Caret $c="#222" /></LayoutBtn>
    </PaneTop>
    <FieldBox>
      <FieldRows>
        <FieldRow $x={35}>Store City</FieldRow>
        <FieldRow $x={35}>Store Name</FieldRow>
        <FieldRow $x={22}><Toggle $plus /><FolderIcon /><MoreFields>Περισσότερα πεδία</MoreFields></FieldRow>
        <FieldRule />
        <FieldRow $h={18} $x={5} $bold><Toggle /><DocIcon /><DayLabel>Time By Day</DayLabel></FieldRow>
        <FieldRow $h={18} $x={22} $bold><Toggle /><CheckBox><svg width="10" height="9" viewBox="0 0 10 9"><path d="M1 5 L4 8 L9 1" fill="none" stroke="#111" strokeWidth="2" /></svg></CheckBox>Hierarchy</FieldRow>
        <FieldRow $h={18} $x={36} $bold>The Year</FieldRow>
        <FieldRow $x={36} $bold>Quarter</FieldRow>
        <FieldRow $x={35}>The Month</FieldRow>
        <FieldRow $x={35}>Week Of Year</FieldRow>
        <FieldRow $x={35}>The Day</FieldRow>
      </FieldRows>
      <FieldScroll><Chevron up /><FieldThumb /><Chevron /></FieldScroll>
    </FieldBox>
    <PaneBottom>
      <DragHint>Σύρετε τα πεδία μεταξύ των παρακάτω περιοχών:</DragHint>
      <Areas>
        <AreaHead $h={20}><Funnel />Φίλτρο αναφο...</AreaHead>
        <AreaHead $h={20}><TableIcon />Ετικέτες στήλης</AreaHead>
        <AreaBox $h={64} />
        <AreaBox $h={64}><Chip>Hierarchy<Caret $s={4} $c="#111" /></Chip></AreaBox>
        <AreaHead $h={22}><TableIcon hot />Ετικέτες γραμμής</AreaHead>
        <AreaHead $h={22}><SigmaInArea $s={15}>Σ</SigmaInArea>Τιμές</AreaHead>
        <AreaBox $h={62}><Chip>Hierarchy<Caret $s={4} $c="#111" /></Chip></AreaBox>
        <AreaBox $h={62}><Chip>Unit Sales<Caret $s={4} $c="#111" /></Chip></AreaBox>
      </Areas>
      <PaneActions>
        <DeferBox />
        Αναβολή ενημέρωσης ...
        <UpdateBtn>Ενημέρωση</UpdateBtn>
      </PaneActions>
    </PaneBottom>
  </Pane>
);

export default function App() {
  return (
    <Win>
      <GlobalStyle />
      <TitleBar>
        <Qat>
          <SaveIcon />
          <QatPair $gap={3} $mr={1}><Undo /><Caret $c="#5a5148" /></QatPair>
          <QatPair $gap={5}><Redo /><Caret $c="#9a8d80" /></QatPair>
        </Qat>
        <QatMore><QatMoreIcon /></QatMore>
        <WindowTitle>Βιβλίο2 - Microsoft Excel</WindowTitle>
        <ContextTab>Εργαλεία Συγκεντρωτικού Π...</ContextTab>
        <WinButtons>
          <WinBtn $w={26}><svg width="8" height="3"><rect width="8" height="2" fill="#222" /></svg></WinBtn>
          <WinBtn $w={26}><svg width="11" height="11" viewBox="0 0 11 11"><path d="M3 3 V1 H10 V7 H8 M1 3.5 H8 V10 H1 Z" fill="none" stroke="#222" /></svg></WinBtn>
          <WinBtn $w={44} $close><svg width="10" height="9" viewBox="0 0 10 9"><path d="M1 1 L9 8 M9 1 L1 8" stroke="#fff" strokeWidth="2" /></svg></WinBtn>
        </WinButtons>
      </TitleBar>
      <OfficeButton><OfficeLogo /></OfficeButton>

      <TabRow>
        {tabs.map(([t, w], i) => <Tab key={t} $w={w} $active={i === 0} $divide={i === 9}>{t}</Tab>)}
        <MiniControls>
          <Help>?</Help>
          <svg width="8" height="3"><rect y="1" width="8" height="2" fill="#777" /></svg>
          <svg width="10" height="8"><rect x=".5" y=".5" width="9" height="7" fill="none" stroke="#777" /></svg>
          <CloseX c="#777" />
        </MiniControls>
      </TabRow>

      <Ribbon>
        <ClipboardGroup />
        <FontGroup />
        <AlignmentGroup />
        <NumberGroup />
        <StylesGroup />
        <CellsGroup />
        <EditingGroup />
      </Ribbon>

      <FormulaBar>
        <NameBox>B2<Caret $s={4} $c="#111" /></NameBox>
        <FxZone>fx</FxZone>
        <FormulaText>USA</FormulaText>
        <ExpandBtn>
          <svg width="9" height="10" viewBox="0 0 9 10"><path d="M1 1 L4.5 4 L8 1 M1 5 L4.5 8 L8 5" fill="none" stroke="#222" strokeWidth="1.5" /></svg>
        </ExpandBtn>
      </FormulaBar>
      <Strip />

      <Main>
        <LeftCol>
          <SheetRow>
            <Grid>
              <SheetHeader />
              <PivotRows />
              <EmptyRows />
            </Grid>
            <VScroll>
              <SplitBox />
              <ScrollBtn><svg width="9" height="5"><path d="M0 5 L4.5 0 L9 5 Z" fill="#aaa" /></svg></ScrollBtn>
              <VThumb><GripStripe /><GripStripe /><GripStripe /></VThumb>
              <ScrollBtn $end><svg width="9" height="5"><path d="M0 0 L4.5 5 L9 0 Z" fill="#aaa" /></svg></ScrollBtn>
            </VScroll>
          </SheetRow>
          <SheetFoot>
            <TabNav>
              <NavGlyph d="M0 0 H1.5 V9 H0 Z M7 0 V9 L2 4.5 Z" />
              <NavGlyph d="M6 0 V9 L1 4.5 Z" />
              <NavGlyph d="M1 0 V9 L6 4.5 Z" />
              <NavGlyph d="M0 0 V9 L5 4.5 Z M5.5 0 H7 V9 H5.5 Z" />
            </TabNav>
            <SheetTab>tmp8F1D</SheetTab>
            <NewTab><NewSheetIcon /></NewTab>
            <HScroll>
              <HEnd />
              <svg width="19" height="10" viewBox="0 0 19 10"><path d="M12 0 V10 L6 5 Z" fill="#999" /></svg>
              <HThumb><i /><i /><i /><i /></HThumb>
              <svg width="75" height="10" viewBox="0 0 75 10"><path d="M62 0 V10 L68 5 Z" fill="#999" /></svg>
              <HEnd />
            </HScroll>
          </SheetFoot>
        </LeftCol>
        <FieldList />
      </Main>

      <StatusBar>
        <StatusText>Έτοιμο</StatusText>
        <StatusCell><MacroIcon /></StatusCell>
        <StatusRight>
          <ViewBtn $on><TableIcon /></ViewBtn>
          <ViewBtn><svg width="11" height="11"><rect x=".5" y=".5" width="10" height="10" fill="#ddd" stroke="#555" /></svg></ViewBtn>
          <ViewBtn><svg width="11" height="11"><path d="M.5 .5 H10.5 V10.5 H.5 Z M5.5 .5 V7" fill="#ddd" stroke="#555" /></svg></ViewBtn>
          <Zoom>100%</Zoom>
          <Slider>
            <ZoomBtn>−</ZoomBtn>
            <SliderThumb />
            <ZoomBtn>+</ZoomBtn>
          </Slider>
        </StatusRight>
      </StatusBar>
    </Win>
  );
}
